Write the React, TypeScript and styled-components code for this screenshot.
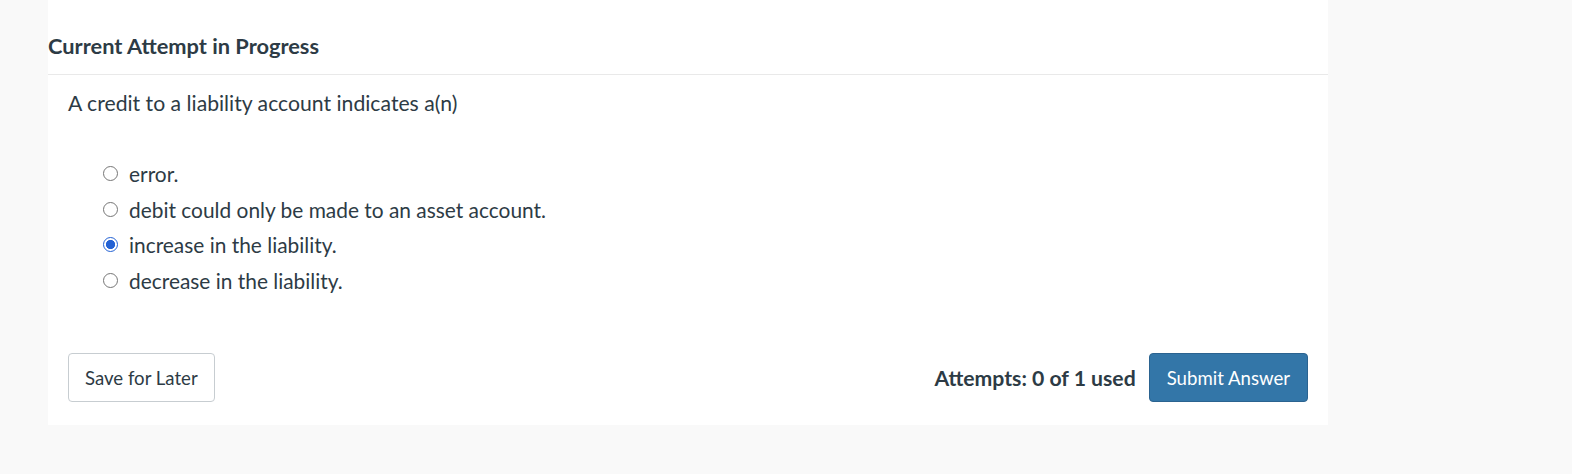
import React, { useState } from "react";
import styled, { createGlobalStyle } from "styled-components";

const Global = createGlobalStyle`
  html, body { margin: 0; padding: 0; background: #f9f9f9; }
  body { font-family: Lato, "Noto Sans", sans-serif; color: #2d3b45; }
`;

const Page = styled.div`
  width: 1572px;
  height: 474px;
  background: #f9f9f9;
  padding-left: 48px;
  box-sizing: border-box;
`;

const Panel = styled.section`
  width: 1280px;
  height: 425px;
  background: #ffffff;
  display: flex;
  flex-direction: column;
`;

const Header = styled.header`
  height: 75px;
  border-bottom: 1px solid #e9e9e9;
  display: flex;
  align-items: center;
  padding-top: 17px;
  box-sizing: border-box;
`;

const Title = styled.h2`
  margin: 0;
  font-size: 21.8px;
  font-weight: 700;
  color: #2d3b45;
`;

const Body = styled.div`
  padding: 15px 20px 0 20px;
  display: flex;
  flex-direction: column;
  flex: 1;
`;

const Question = styled.p`
  margin: 0;
  font-size: 21.2px;
  line-height: 26px;
  color: #2d3b45;
`;

const Options = styled.ul`
  list-style: none;
  margin: 40px 0 0 0;
  padding: 0 0 0 35px;
  display: flex;
  flex-direction: column;
`;

const Option = styled.li`
  height: 35.6px;
  display: flex;
  align-items: center;
`;

const Label = styled.label`
  display: flex;
  align-items: center;
  gap: 11px;
  font-size: 20.9px;
  color: #2d3b45;
  cursor: pointer;
`;

const Radio = styled.input.attrs({ type: "radio" })`
  appearance: none;
  margin: 0;
  width: 15px;
  height: 15px;
  border-radius: 50%;
  border: 1px solid #767676;
  background: #fff;
  box-sizing: border-box;
  &:checked {
    border: 1px solid #2462d4;
    background: radial-gradient(circle, #2462d4 0 4.3px, #fff 4.9px);
  }
`;

const Footer = styled.div`
  margin-top: auto;
  margin-bottom: 23px;
  display: flex;
  align-items: center;
  justify-content: space-between;
`;

const RightGroup = styled.div`
  display: flex;
  align-items: center;
  gap: 13px;
`;

const Attempts = styled.span`
  font-size: 21.2px;
  font-weight: 700;
  color: #2d3b45;
`;

const Button = styled.button<{ $primary?: boolean }>`
  height: 49px;
  padding: 0 ${(p) => (p.$primary ? "17px" : "16px")};
  border-radius: 4px;
  font-family: Lato, "Noto Sans", sans-serif;
  font-size: 18.6px;
  cursor: pointer;
  box-sizing: border-box;
  background: ${(p) => (p.$primary ? "#3376a8" : "#ffffff")};
  color: ${(p) => (p.$primary ? "#ffffff" : "#2d3b45")};
  border: 1px solid ${(p) => (p.$primary ? "#2b6390" : "#c7cdd1")};
`;

const choices = [
  "error.",
  "debit could only be made to an asset account.",
  "increase in the liability.",
  "decrease in the liability.",
];

export default function App() {
  const [sel, setSel] = useState(2);
  return (
    <>
      <Global />
      <Page>
        <Panel>
          <Header>
            <Title>Current Attempt in Progress</Title>
          </Header>
          <Body>
            <Question>A credit to a liability account indicates a(n)</Question>
            <Options>
              {choices.map((c, i) => (
                <Option key={c}>
                  <Label>
                    <Radio name="q" checked={sel === i} onChange={() => setSel(i)} />
                    {c}
                  </Label>
                </Option>
              ))}
            </Options>
            <Footer>
              <Button>Save for Later</Button>
              <RightGroup>
                <Attempts>Attempts: 0 of 1 used</Attempts>
                <Button $primary>Submit Answer</Button>
              </RightGroup>
            </Footer>
          </Body>
        </Panel>
      </Page>
    </>
  );
}
